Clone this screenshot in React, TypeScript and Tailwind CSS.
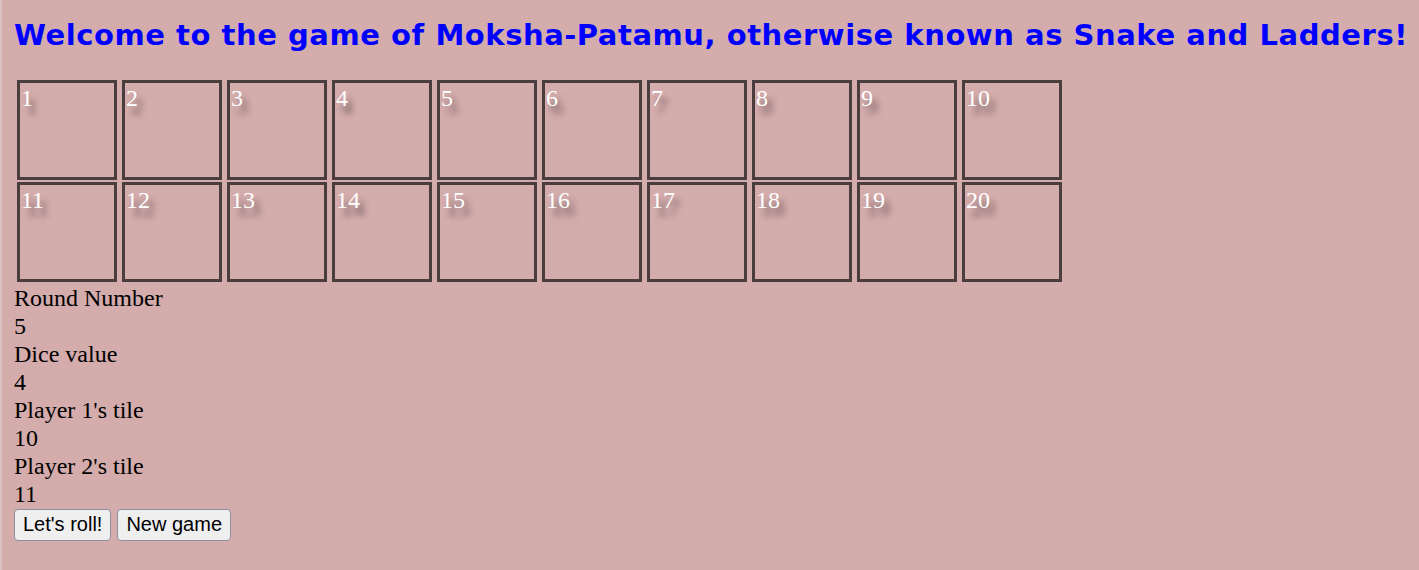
import React from "react";

const tiles = Array.from({ length: 20 }, (_, i) => i + 1);

const info: [string, string][] = [
  ["Round Number", "5"],
  ["Dice value", "4"],
  ["Player 1's tile", "10"],
  ["Player 2's tile", "11"],
];

export default function App() {
  return (
    <div className="min-h-[570px] w-full bg-[#d4acac] border-l-2 border-[#ddc3c3]">
      <h1 className="pt-[19px] pl-[12px] text-[29px] leading-[32px] tracking-[0.55px] font-bold text-[#0000ff] font-['DejaVu_Sans',Verdana,sans-serif] whitespace-nowrap">
        Welcome to the game of Moksha-Patamu, otherwise known as Snake and Ladders!
      </h1>
      <div className="mt-[29px] pl-[15px] grid grid-cols-[repeat(10,100px)] gap-x-[5px] gap-y-[2px]">
        {tiles.map((n) => (
          <div
            key={n}
            className="w-[100px] h-[100px] border-[3px] border-[#4a3d3d] pl-[1px] pt-[1px]"
          >
            <span className="text-white text-[24px] leading-[28px] font-['Liberation_Serif','Times_New_Roman',serif] [text-shadow:5px_8px_6px_rgba(0,0,0,0.5)]">
              {n}
            </span>
          </div>
        ))}
      </div>
      <div className="mt-[2px] pl-[12px] font-['Liberation_Serif','Times_New_Roman',serif] text-[24px] leading-[28px] text-black">
        {info.map(([label, value]) => (
          <React.Fragment key={label}>
            <div>{label}</div>
            <div>{value}</div>
          </React.Fragment>
        ))}
      </div>
      <div className="mt-[1px] pl-[12px] flex gap-[6px] font-['Liberation_Sans',Arial,sans-serif] text-[20px] leading-[23px] text-black">
        <button className="px-[8px] pt-[3px] pb-[4px] bg-[#efeff0] border border-[#8f8f9d] rounded-[4px]">
          Let's roll!
        </button>
        <button className="px-[8px] pt-[3px] pb-[4px] bg-[#efeff0] border border-[#8f8f9d] rounded-[4px]">
          New game
        </button>
      </div>
    </div>
  );
}
